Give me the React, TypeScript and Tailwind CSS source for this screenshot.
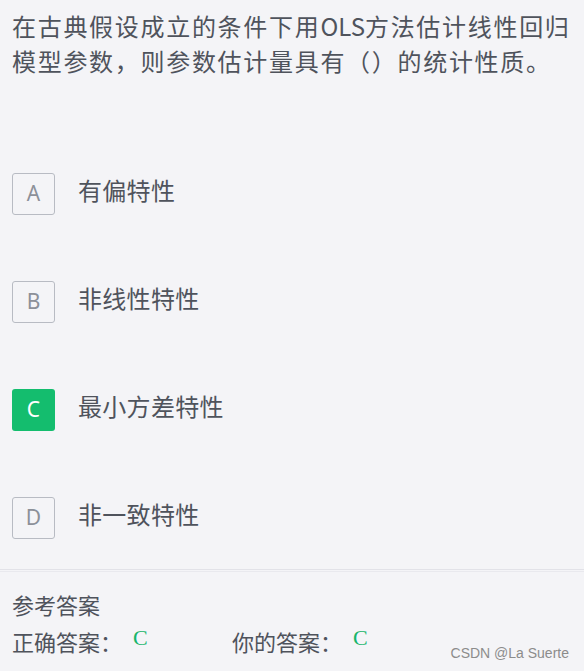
import React from 'react';

type Option = { key: string; text: string; correct?: boolean };

const options: Option[] = [
  { key: 'A', text: '有偏特性' },
  { key: 'B', text: '非线性特性' },
  { key: 'C', text: '最小方差特性', correct: true },
  { key: 'D', text: '非一致特性' },
];

const cjk = "font-['Noto_Sans_CJK_SC','Noto_Sans',sans-serif]";

// Single answer row with letter badge
function OptionRow({ option }: { option: Option }) {
  return (
    <div className="flex items-center">
      <div
        className={
          option.correct
            ? "flex h-[42px] w-[43px] items-center justify-center rounded-[3px] bg-[#14bd6e] text-[21px] text-white font-['Noto_Sans',sans-serif]"
            : "flex h-[42px] w-[43px] items-center justify-center rounded-[3px] border border-[#b8bbc3] text-[21px] text-[#8c9099] font-['Noto_Sans',sans-serif]"
        }
      >
        {option.key}
      </div>
      <div className={`ml-[23px] -mt-[9px] text-[24px] leading-[30px] tracking-[0.3px] text-[#4f535c] ${cjk}`}>{option.text}</div>
    </div>
  );
}

export default function App() {
  return (
    <div className="relative h-[671px] w-[584px] overflow-hidden bg-[#f4f4f7]">
      <div className={`whitespace-nowrap px-[12px] pt-[8px] text-[24px] leading-[35px] tracking-[1.7px] text-[#4f535c] ${cjk}`}>
        在古典假设成立的条件下用<span className="tracking-[0px]">OLS</span>方法估计线性回归
        <br />
        模型参数，则参数估计量具有（）的统计性质。
      </div>

      <div className="mt-[95px] flex flex-col gap-[66px] px-[12px]">
        {options.map(o => (
          <OptionRow key={o.key} option={o} />
        ))}
      </div>

      <div className="mt-[30px]">
        <div className="h-px bg-[#e2e2e8]" />
        <div className="mt-px h-px bg-[#e9e9ee]" />
      </div>

      <div className={`px-[12px] pt-[17px] text-[22px] text-[#4f535c] ${cjk}`}>
        <div className="leading-[30px]">参考答案</div>
        <div className="mt-[7px] flex leading-[30px]">
          <div className="flex w-[220px] items-start">
            <span>正确答案：</span>
            <span className="ml-[11px] -mt-[3px] text-[22px] text-[#18b56c] font-['Liberation_Serif',serif]">C</span>
          </div>
          <div className="flex items-start">
            <span>你的答案：</span>
            <span className="ml-[11px] -mt-[3px] text-[22px] text-[#18b56c] font-['Liberation_Serif',serif]">C</span>
          </div>
        </div>
      </div>

      <div className="absolute bottom-[7px] right-[15px] text-[14px] text-[#8c8c8c] font-['Liberation_Sans',sans-serif]">
        CSDN @La Suerte
      </div>
    </div>
  );
}
